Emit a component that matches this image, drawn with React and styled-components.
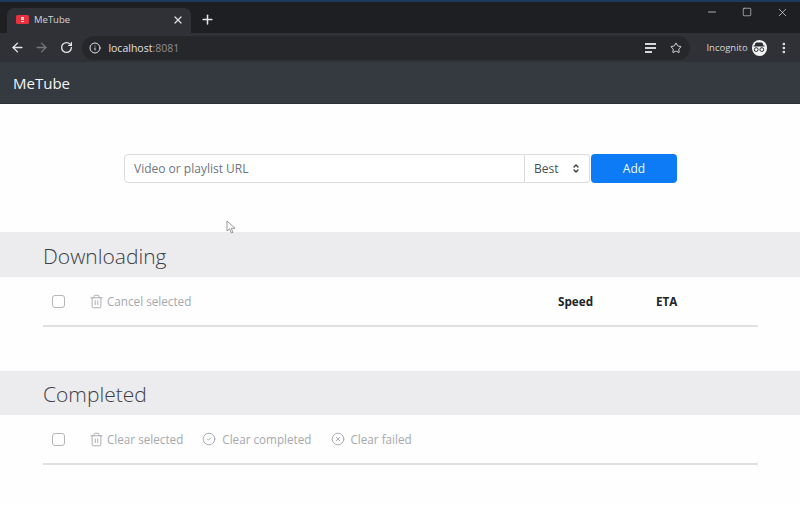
import styled, { createGlobalStyle } from 'styled-components';
import { ArrowLeft, ArrowRight, RotateCw, Info, Star, X, Plus, Minus, Square, EllipsisVertical, Trash2, CircleCheck, CircleX, ChevronUp, ChevronDown } from 'lucide-react';

const GlobalStyle = createGlobalStyle`
  html, body {
    margin: 0;
    padding: 0;
    background: #fff;
  }
  * {
    box-sizing: border-box;
  }
  body {
    font-family: "Open Sans", "Noto Sans", sans-serif;
    overflow: hidden;
  }
`;

const App = () => {
  return (
    <Page>
      <GlobalStyle />
      <TabStrip>
        <Tab>
          <Favicon>
            <svg width="13" height="9" viewBox="0 0 13 9">
              <rect width="13" height="9" rx="1.5" fill="#e8323f" />
              <rect x="5" y="2" width="3" height="3" fill="#f7c9cc" />
              <rect x="5" y="6" width="3" height="1" fill="#f7c9cc" />
            </svg>
          </Favicon>
          <TabTitle>MeTube</TabTitle>
          <X size={12} strokeWidth={2.4} color="#dfe0e2" />
        </Tab>
        <NewTab>
          <Plus size={15} strokeWidth={2.4} />
        </NewTab>
        <WindowControls>
          <Minus size={12} strokeWidth={1.6} />
          <Square size={10} strokeWidth={1.6} />
          <X size={13} strokeWidth={1.4} />
        </WindowControls>
      </TabStrip>
      <Toolbar>
        <NavIcon>
          <ArrowLeft size={15} strokeWidth={2.2} />
        </NavIcon>
        <NavIcon $muted>
          <ArrowRight size={15} strokeWidth={2.2} />
        </NavIcon>
        <NavIcon>
          <RotateCw size={13} strokeWidth={2.4} />
        </NavIcon>
        <Omnibox>
          <Info size={12} strokeWidth={2} color="#e4e5e7" />
          <Url>
            localhost<span>:8081</span>
          </Url>
          <OmniboxEnd>
            <svg width="11" height="10" viewBox="0 0 11 10" fill="#d6d7d9">
              <rect width="11" height="2" />
              <rect y="4" width="11" height="2" />
              <rect y="8" width="7" height="2" />
            </svg>
            <Star size={12} strokeWidth={2} color="#dcdde0" />
          </OmniboxEnd>
        </Omnibox>
        <Incognito>Incognito</Incognito>
        <IncognitoBadge>
          <svg width="12" height="11" viewBox="0 0 12 11" fill="none" stroke="#2c2e33">
            <path d="M3 1h6l1 2.5H2z" fill="#2c2e33" />
            <path d="M0.5 4h11" strokeWidth="1" />
            <circle cx="3.2" cy="7.6" r="1.9" strokeWidth="1" />
            <circle cx="8.8" cy="7.6" r="1.9" strokeWidth="1" />
          </svg>
        </IncognitoBadge>
        <EllipsisVertical size={14} strokeWidth={2.6} color="#e4e5e7" />
      </Toolbar>
      <Navbar>MeTube</Navbar>
      <AddForm>
        <UrlInput>Video or playlist URL</UrlInput>
        <QualitySelect>
          Best
          <SelectArrows>
            <ChevronUp size={8} strokeWidth={4} />
            <ChevronDown size={8} strokeWidth={4} />
          </SelectArrows>
        </QualitySelect>
        <AddButton>Add</AddButton>
      </AddForm>
      <Section $gap={49}>
        <SectionTitle $height={45}>Downloading</SectionTitle>
        <ActionRow>
          <Checkbox />
          <Action $gap={3}>
            <Trash2 size={15} strokeWidth={1.5} />
            Cancel selected
          </Action>
          <ColumnHead $width={98} $first>
            Speed
          </ColumnHead>
          <ColumnHead $width={102}>ETA</ColumnHead>
        </ActionRow>
      </Section>
      <Section $gap={44}>
        <SectionTitle $height={44}>Completed</SectionTitle>
        <ActionRow>
          <Checkbox />
          <Action $gap={3}>
            <Trash2 size={15} strokeWidth={1.5} />
            Clear selected
          </Action>
          <Action $gap={6}>
            <CircleCheck size={14} strokeWidth={1.6} />
            Clear completed
          </Action>
          <Action $gap={6}>
            <CircleX size={14} strokeWidth={1.6} />
            Clear failed
          </Action>
        </ActionRow>
      </Section>
      <Cursor>
        <svg width="10" height="14" viewBox="0 0 10 14">
          <path d="M1 1v10l2.5-2.2L5.4 13l1.6-.7-1.8-4H9z" fill="#fff" stroke="#8a8c90" strokeWidth="0.9" />
        </svg>
      </Cursor>
    </Page>
  );
};

const Page = styled.div`
  position: relative;
  width: 800px;
  height: 505px;
  overflow: hidden;
  background: #fefefe;
`;

const TabStrip = styled.div`
  display: flex;
  align-items: flex-end;
  height: 33px;
  padding-left: 7px;
  background: #1e1f22;
  border-top: 2px solid #1c3a5e;
`;

const Tab = styled.div`
  display: flex;
  align-items: center;
  width: 184px;
  height: 25px;
  padding: 0 7px 2px 9px;
  background: #2f3136;
  border-radius: 7px 7px 0 0;
  color: #dfe0e2;
`;

const Favicon = styled.div`
  display: flex;
  width: 18px;
`;

const TabTitle = styled.span`
  flex: 1;
  font-size: 9.5px;
  color: #d4d5d8;
`;

const NewTab = styled.div`
  display: flex;
  align-items: center;
  justify-content: center;
  width: 32px;
  height: 25px;
  padding-bottom: 2px;
  color: #e4e5e7;
`;

const WindowControls = styled.div`
  display: flex;
  align-items: center;
  gap: 24px;
  align-self: flex-start;
  margin-left: auto;
  height: 22px;
  padding: 0 11px 2px 0;
  color: #d6d7d9;
`;

const Toolbar = styled.div`
  display: flex;
  align-items: center;
  height: 29px;
  padding: 0 9px 0 5px;
  background: #2f3136;
`;

const NavIcon = styled.div`
  display: flex;
  justify-content: center;
  width: 25px;
  color: ${(props) => (props.$muted ? '#75777b' : '#e6e7e9')};
`;

const Omnibox = styled.div`
  display: flex;
  align-items: center;
  flex: 0 0 608px;
  height: 24px;
  margin-left: 4px;
  padding: 0 8px 0 7px;
  background: #26272b;
  border-radius: 12px;
`;

const Url = styled.span`
  margin-left: 7px;
  font-size: 10.5px;
  color: #e0e1e3;

  span {
    color: #8c8e92;
  }
`;

const OmniboxEnd = styled.div`
  display: flex;
  align-items: center;
  gap: 14px;
  margin-left: auto;
`;

const Incognito = styled.span`
  margin-left: 16px;
  font-size: 9.5px;
  color: #d4d5d8;
`;

const IncognitoBadge = styled.div`
  display: flex;
  align-items: center;
  justify-content: center;
  width: 16px;
  height: 16px;
  margin: 0 10px 0 4px;
  background: #f2f2f3;
  border-radius: 50%;
`;

const Navbar = styled.div`
  display: flex;
  align-items: center;
  height: 42px;
  padding: 1px 0 0 13px;
  background: #343a40;
  font-size: 15px;
  color: #f4f4f5;
  border-bottom: 1px solid #2c3035;
`;

const AddForm = styled.div`
  display: flex;
  height: 29px;
  margin: 50px 123px 0 124px;
`;

const UrlInput = styled.div`
  display: flex;
  align-items: center;
  flex: 1;
  padding-left: 9px;
  border: 1.5px solid #dadcdf;
  border-radius: 4px 0 0 4px;
  font-size: 12px;
  color: #6c757d;
  background: #fff;
`;

const QualitySelect = styled.div`
  display: flex;
  align-items: center;
  justify-content: space-between;
  width: 65px;
  padding: 0 9px;
  border: 1.5px solid #dadcdf;
  border-left: 0;
  border-radius: 0 4px 4px 0;
  font-size: 12px;
  color: #495057;
  background: #fff;
`;

const SelectArrows = styled.div`
  display: flex;
  flex-direction: column;
  color: #343a40;

  svg {
    margin: -1.5px 0;
  }
`;

const AddButton = styled.div`
  display: flex;
  align-items: center;
  justify-content: center;
  width: 86px;
  margin-left: 1px;
  border-radius: 4px;
  font-size: 12px;
  color: #f2f8ff;
  background: #0d7bf5;
`;

const Section = styled.section`
  margin-top: ${(props) => props.$gap}px;
`;

const SectionTitle = styled.h2`
  display: flex;
  align-items: center;
  height: ${(props) => props.$height}px;
  margin: 0;
  padding: 2px 0 0 43px;
  background: #ecebed;
  font-size: 21px;
  font-weight: 300;
  color: #3c4045;
`;

const ActionRow = styled.div`
  display: flex;
  align-items: center;
  height: 50px;
  margin: 0 42px 0 43px;
  padding-left: 9px;
  border-bottom: 2px solid #dfe0e2;
`;

const Checkbox = styled.div`
  width: 13px;
  height: 13px;
  margin-right: 24px;
  border: 1.5px solid #b4b6ba;
  border-radius: 3px;
  background: #fff;
`;

const Action = styled.div`
  display: flex;
  align-items: center;
  gap: ${(props) => props.$gap}px;
  margin-right: 19px;
  font-size: 11.7px;
  color: #a6a9ad;
`;

const ColumnHead = styled.div`
  width: ${(props) => props.$width}px;
  margin-left: ${(props) => (props.$first ? 'auto' : '0')};
  font-size: 11.7px;
  font-weight: 700;
  color: #212529;
`;

const Cursor = styled.div`
  position: absolute;
  top: 220px;
  left: 226px;
  display: flex;
`;

export default App;
